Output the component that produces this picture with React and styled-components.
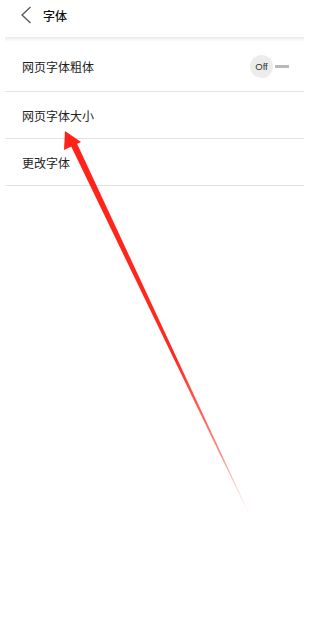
import React from "react";
import styled, { createGlobalStyle } from "styled-components";

const GlobalStyle = createGlobalStyle`
  html, body {
    margin: 0;
    padding: 0;
    background: #fff;
  }
  body {
    font-family: "Noto Sans CJK SC", "Noto Sans", sans-serif;
    color: #222;
  }
`;

const Page = styled.div`
  position: relative;
  width: 304px;
  height: 631px;
  overflow: hidden;
  background: #fff;
`;

const Header = styled.header`
  display: flex;
  align-items: center;
  gap: 9px;
  height: 30px;
  padding: 0 0 7px 18px;
`;

const BackButton = styled.button`
  display: flex;
  align-items: center;
  justify-content: center;
  width: 16px;
  height: 22px;
  padding: 0;
  border: none;
  background: none;
`;

const Title = styled.h1`
  margin: 0;
  font-size: 12px;
  font-weight: 500;
  color: #111;
`;

const HeaderShadow = styled.div`
  height: 5px;
  margin-left: 5px;
  background: linear-gradient(#e9e9e9, #f6f6f6 50%, #fff);
`;

const List = styled.ul`
  list-style: none;
  margin: 0 0 0 5px;
  padding: 0;
`;

const Row = styled.li`
  display: flex;
  align-items: center;
  justify-content: space-between;
  height: ${(p) => (p.$tall ? 49 : 46)}px;
  padding: 0 15px 0 17px;
  border-bottom: 1px solid #e3e3e3;
  font-size: 12px;
  color: #222;
`;

const Toggle = styled.div`
  display: flex;
  align-items: center;
`;

const Knob = styled.span`
  display: flex;
  align-items: center;
  justify-content: center;
  width: 23px;
  height: 23px;
  border-radius: 50%;
  background: #ececec;
  font-family: "Liberation Sans", Arial, sans-serif;
  font-size: 9.5px;
  color: #333;
`;

const Track = styled.span`
  width: 14px;
  height: 3px;
  margin-left: 2px;
  background: #b9b9b9;
`;

const Overlay = styled.svg`
  position: absolute;
  left: 0;
  top: 0;
  pointer-events: none;
`;

const rows = [
  { label: "网页字体粗体", toggle: true },
  { label: "网页字体大小" },
  { label: "更改字体" },
];

export default function App() {
  return (
    <Page>
      <GlobalStyle />
      <Header>
        <BackButton aria-label="返回">
          <svg width="12" height="18" viewBox="0 0 12 18">
            <path d="M10.5 1 L2 9 L10.5 17" fill="none" stroke="#555" strokeWidth="1.3" />
          </svg>
        </BackButton>
        <Title>字体</Title>
      </Header>
      <HeaderShadow />
      <List>
        {rows.map((r) => (
          <Row key={r.label} $tall={r.toggle}>
            <span>{r.label}</span>
            {r.toggle && (
              <Toggle>
                <Knob>Off</Knob>
                <Track />
              </Toggle>
            )}
          </Row>
        ))}
      </List>
      <Overlay width="304" height="631" viewBox="0 0 304 631">
        <defs>
          <linearGradient id="fade" x1="65" y1="131" x2="248" y2="512" gradientUnits="userSpaceOnUse">
            <stop offset="0" stopColor="#ff2218" />
            <stop offset="0.6" stopColor="#ff2a1f" />
            <stop offset="0.85" stopColor="#ff6a60" stopOpacity="0.8" />
            <stop offset="1" stopColor="#ffd0cc" stopOpacity="0.3" />
          </linearGradient>
        </defs>
        <polygon points="70.5,145 76.5,142.5 248.5,512 247.8,512" fill="url(#fade)" />
        <polygon points="65,131 81,142 64,150" fill="#ff2218" />
      </Overlay>
    </Page>
  );
}
